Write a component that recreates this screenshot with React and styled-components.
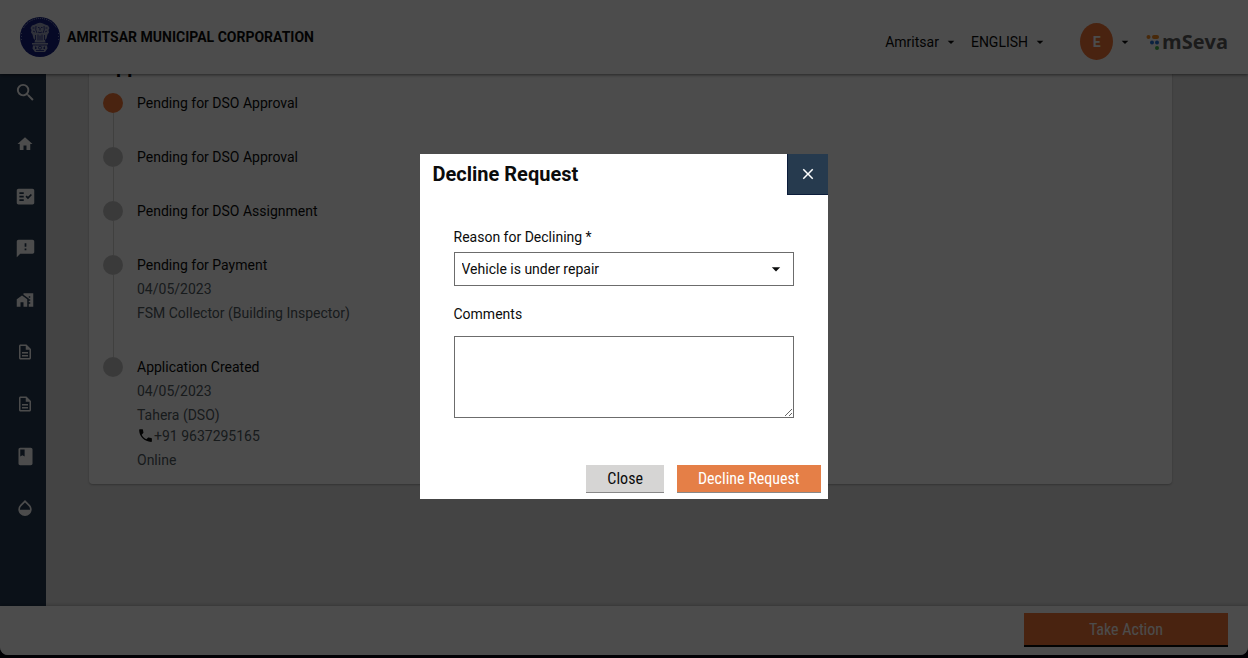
import React from "react";
import styled, { createGlobalStyle } from "styled-components";
import {
  MdSearch, MdHome, MdFactCheck, MdFeedback, MdHomeWork, MdOutlineDescription,
  MdBook, MdOpacity, MdArrowDropDown, MdPhone, MdClose,
} from "react-icons/md";

const GlobalStyle = createGlobalStyle`
  *, *::before, *::after { box-sizing: border-box; }
  body { margin: 0; background: #06030f; }
  body, button, select, textarea { font-family: Roboto, "Liberation Sans", sans-serif; }
  h1, h2, h3, p, ol, ul { margin: 0; padding: 0; }
  ol, ul { list-style: none; }
`;

const Window = styled.div`
  display: flex;
  flex-direction: column;
  height: calc(100vh - 3px);
  min-height: 480px;
  overflow: hidden;
  border-radius: 0 0 8px 8px;
  background: #e3e3e3;
  color: #0b0c0c;
  font-size: 14px;
`;

const Header = styled.header`
  display: flex;
  align-items: center;
  justify-content: space-between;
  flex: none;
  height: 74px;
  padding: 0 20px;
  background: #fff;
  box-shadow: 0 1px 3px rgba(0, 0, 0, 0.5);
  z-index: 1;
`;

const Brand = styled.div`
  display: flex;
  align-items: center;
  gap: 7px;
`;

const BrandName = styled.h1`
  font-size: 14px;
  line-height: 20px;
  font-weight: 700;
`;

const HeaderTools = styled.div`
  display: flex;
  align-items: center;
  padding-top: 9px;
`;

const MenuButton = styled.button`
  display: flex;
  align-items: center;
  gap: 4px;
  padding: 0;
  margin-right: ${(p) => p.$gap}px;
  border: 0;
  background: none;
  color: #0b0c0c;
  font-size: 14px;
  line-height: 20px;
`;

const Avatar = styled.span`
  display: flex;
  align-items: center;
  justify-content: center;
  width: 33px;
  height: 37px;
  border-radius: 50%;
  background: #f47738;
  color: #fff;
  font-size: 14px;
  font-weight: 700;
`;

const Logo = styled.div`
  display: flex;
  align-items: center;
  gap: 2px;
  color: #5c5c5c;
  font: 700 20px/24px "Open Sans", "Noto Sans", sans-serif;
`;

const Body = styled.div`
  display: flex;
  flex: 1;
  min-height: 0;
`;

const Sidebar = styled.nav`
  display: flex;
  flex-direction: column;
  align-items: center;
  gap: 32px;
  flex: none;
  width: 46px;
  padding: 8px 0 0 4px;
  background: #263a52;
`;

const SideLink = styled.a`
  display: flex;
  align-items: center;
  justify-content: center;
  width: 24px;
  height: 20px;
  color: #fff;
`;

const Main = styled.main`
  flex: 1;
  overflow: hidden;
  padding: 0 76px 0 43px;
`;

const Card = styled.section`
  margin-top: -32px;
  padding: 12px 14px;
  border-radius: 4px;
  background: #fff;
  box-shadow: 0 1px 2px rgba(0, 0, 0, 0.25);
`;

const CardTitle = styled.h2`
  font-size: 20px;
  line-height: 24px;
  margin-bottom: 13px;
`;

const Step = styled.li`
  display: grid;
  grid-template-columns: 20px 1fr;
  gap: 14px;

  &:last-child > div { padding-bottom: 0; }
  &:last-child > span::after { display: none; }
`;

const Marker = styled.span`
  display: flex;
  flex-direction: column;
  align-items: center;
  padding-top: 2px;

  &::before {
    content: "";
    flex: none;
    width: 20px;
    height: 20px;
    border-radius: 50%;
    background: ${(p) => (p.$active ? "#f47738" : "#c4c4c4")};
  }
  &::after {
    content: "";
    flex: 1;
    width: 1px;
    margin-bottom: -2px;
    background: #d6d5d4;
  }
`;

const StepBody = styled.div`
  padding-bottom: 30px;
  line-height: 24px;
`;

const StepTitle = styled.h3`
  font-size: 14px;
  font-weight: 400;
`;

const Detail = styled.p`
  color: #505a5f;
`;

const PhoneLine = styled.p`
  display: flex;
  align-items: center;
  margin-bottom: 4px;
  line-height: 16px;
  color: #505a5f;

  svg { color: #0b0c0c; }
`;

const ActionBar = styled.footer`
  display: flex;
  justify-content: flex-end;
  flex: none;
  padding: 7px 20px 8px;
  background: #fff;
  box-shadow: 0 -1px 3px rgba(0, 0, 0, 0.2);
`;

const Button = styled.button`
  height: ${(p) => (p.$large ? 34 : 28)}px;
  min-width: ${(p) => (p.$large ? 204 : 0)}px;
  padding: ${(p) => (p.$large ? 2 : 0)}px 21px 0;
  border: 0;
  border-bottom: ${(p) => (p.$large ? "2px solid #0b0c0c" : "1px solid #888")};
  background: ${(p) => (p.$secondary ? "#d6d5d4" : p.$large ? "#f47738" : "#e57f47")};
  color: ${(p) => (p.$secondary ? "#0b0c0c" : "#fff")};
  font-family: "Roboto Condensed", Roboto, sans-serif;
  font-size: 16px;
  line-height: 20px;
`;

const Overlay = styled.div`
  position: fixed;
  inset: 0;
  z-index: 2;
  display: flex;
  align-items: center;
  justify-content: center;
  padding: 0 1px 5px 0;
  background: rgba(0, 0, 0, 0.7);
`;

const Dialog = styled.div`
  width: 408px;
  max-width: 100%;
  background: #fff;
  color: #0b0c0c;
  font-size: 14px;
`;

const DialogHeader = styled.div`
  display: flex;
  justify-content: space-between;
  padding-left: 13px;
`;

const DialogTitle = styled.h2`
  font-size: 20px;
  line-height: 40px;
  font-weight: 700;
`;

const CloseButton = styled.button`
  display: flex;
  align-items: center;
  justify-content: center;
  width: 41px;
  height: 41px;
  padding: 0;
  border: solid #0b1c3a;
  border-width: 0 0 1px 1px;
  background: #263a4e;
  color: #fff;
`;

const Form = styled.form`
  display: flex;
  flex-direction: column;
  padding: 32px 34px 0;
`;

const Label = styled.label`
  margin-bottom: ${(p) => p.$gap}px;
  line-height: 20px;
`;

const SelectBox = styled.div`
  display: grid;
  align-items: center;
  margin-bottom: 18px;

  > * { grid-area: 1 / 1; }
  > svg { justify-self: end; margin-right: 8px; pointer-events: none; }
`;

const Select = styled.select`
  appearance: none;
  width: 100%;
  height: 34px;
  padding: 0 7px;
  border: 1px solid #6c6c6c;
  border-radius: 0;
  background: #fff;
  color: #0b0c0c;
  font-size: 14px;
`;

const TextArea = styled.textarea`
  height: 82px;
  border: 1px solid #6c6c6c;
  border-radius: 0;
  background: #fff;
  resize: vertical;
`;

const DialogActions = styled.div`
  display: flex;
  justify-content: flex-end;
  gap: 13px;
  padding: 47px 7px 6px;
`;

const Emblem = () => (
  <svg width="40" height="40" viewBox="0 0 40 40" role="img" aria-label="Emblem">
    <circle cx="20" cy="20" r="20" fill="#141f80" />
    <path d="M3.500 11A19 19 0 0 1 36.500 11" fill="none" stroke="#aab2d4" strokeDasharray="1 1" />
    <path d="M1.500 16v8m37-8v8" fill="none" stroke="#7b86bb" strokeDasharray="1 2" />
    <g fill="#a2a8c4">
      <path d="M17 6.500q3-1.500 6 0l2 1 3 1 1.500 2.500-1 2 .5 2.500-1.500 2-1 4-1.500 1.500.5 2.500H14.500l.5-2.500-1.500-1.500-1-4-1.500-2 .5-2.500-1-2L12 8.500l3-1z" />
      <path d="M12 26h16v1.500l-1 1 .5 3-2.500 3.500H15l-2.500-3.500.5-3-1-1z" />
    </g>
    <g fill="none" stroke="#141f80" strokeWidth="0.800">
      <path d="M16 9q-1 4 1 7m7-7q1 4-1 7M18 10.500h1.500m1.500 0h1.500M20 11v2.500m-2 1.500q2 1.500 4 0M12.500 11h2m11 0h2M13 14l2 1m12-1-2 1M15.500 18v5M18 17.500v6m2-5v5m2-6v6m2.500-5.500v5M12 28h16M16 33.500h8" />
      <circle cx="20" cy="30.700" r="1.500" />
      <path d="M15 31h2m6 0h2M15.500 29.500v2.500m9-2.500v2.500" />
    </g>
  </svg>
);

const LogoMark = () => (
  <svg width="14" height="18" viewBox="0 0 14 18" aria-hidden="true">
    <circle cx="2.500" cy="4" r="2" fill="#f08a24" />
    <rect x="6" y="2" width="7" height="4" rx="2" fill="#f08a24" />
    <circle cx="6" cy="9.500" r="2" fill="#2472d8" />
    <circle cx="11" cy="9.500" r="2" fill="#2472d8" />
    <circle cx="11" cy="15" r="2" fill="#43b649" />
  </svg>
);

const links = [
  ["Search", MdSearch, 23],
  ["Home", MdHome, 18],
  ["Inbox", MdFactCheck, 21],
  ["Complaints", MdFeedback, 21],
  ["Property", MdHomeWork, 18],
  ["Documents", MdOutlineDescription, 18],
  ["Reports", MdOutlineDescription, 18],
  ["Register", MdBook, 21],
  ["Water", MdOpacity, 20],
];

const steps = [
  { title: "Pending for DSO Approval" },
  { title: "Pending for DSO Approval" },
  { title: "Pending for DSO Assignment" },
  { title: "Pending for Payment", details: ["04/05/2023", "FSM Collector (Building Inspector)"] },
  { title: "Application Created", details: ["04/05/2023", "Tahera (DSO)"], phone: "+91 9637295165", source: "Online" },
];

export default function App() {
  return (
    <>
      <GlobalStyle />
      <Window>
        <Header>
          <Brand>
            <Emblem />
            <BrandName>AMRITSAR MUNICIPAL CORPORATION</BrandName>
          </Brand>
          <HeaderTools>
            <MenuButton $gap={12}>Amritsar <MdArrowDropDown size={16} /></MenuButton>
            <MenuButton $gap={32}>ENGLISH <MdArrowDropDown size={16} /></MenuButton>
            <MenuButton $gap={13}><Avatar>E</Avatar><MdArrowDropDown size={16} /></MenuButton>
            <Logo><LogoMark />mSeva</Logo>
          </HeaderTools>
        </Header>
        <Body>
          <Sidebar>
            {links.map(([name, Icon, size]) => (
              <SideLink key={name} href="#" aria-label={name}><Icon size={size} /></SideLink>
            ))}
          </Sidebar>
          <Main>
            <Card>
              <CardTitle>Application Timeline</CardTitle>
              <ol>
                {steps.map((s, i) => (
                  <Step key={i}>
                    <Marker $active={i === 0} />
                    <StepBody>
                      <StepTitle>{s.title}</StepTitle>
                      {s.details?.map((d) => <Detail key={d}>{d}</Detail>)}
                      {s.phone && <PhoneLine><MdPhone size={17} />{s.phone}</PhoneLine>}
                      {s.source && <Detail>{s.source}</Detail>}
                    </StepBody>
                  </Step>
                ))}
              </ol>
            </Card>
          </Main>
        </Body>
        <ActionBar>
          <Button $large>Take Action</Button>
        </ActionBar>
      </Window>
      <Overlay>
        <Dialog role="dialog" aria-modal="true" aria-labelledby="dialog-title">
          <DialogHeader>
            <DialogTitle id="dialog-title">Decline Request</DialogTitle>
            <CloseButton aria-label="Close dialog"><MdClose size={18} /></CloseButton>
          </DialogHeader>
          <Form id="decline-form">
            <Label htmlFor="reason" $gap={5}>Reason for Declining *</Label>
            <SelectBox>
              <Select id="reason" defaultValue="repair">
                <option value="repair">Vehicle is under repair</option>
              </Select>
              <MdArrowDropDown size={20} />
            </SelectBox>
            <Label htmlFor="comments" $gap={12}>Comments</Label>
            <TextArea id="comments" />
          </Form>
          <DialogActions>
            <Button $secondary>Close</Button>
            <Button form="decline-form">Decline Request</Button>
          </DialogActions>
        </Dialog>
      </Overlay>
    </>
  );
}
